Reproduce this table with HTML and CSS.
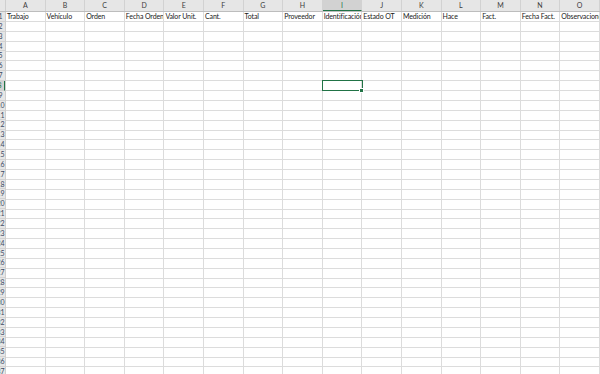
FILE: index.html
```html
<!DOCTYPE html>
<html lang="es">
<head>
<meta charset="utf-8">
<title>Hoja</title>
<link rel="stylesheet" href="styles.css">
</head>
<body>
<div class="sheet">
  <div class="colheads">
    <div class="corner"></div>
    <div class="ch">A</div><div class="ch">B</div><div class="ch">C</div><div class="ch">D</div><div class="ch">E</div>
    <div class="ch">F</div><div class="ch">G</div><div class="ch">H</div><div class="ch active">I</div><div class="ch">J</div>
    <div class="ch">K</div><div class="ch">L</div><div class="ch">M</div><div class="ch">N</div><div class="ch">O</div>
  </div>
  <div class="body">
    <div class="rowheads">
      <div class="rh"><span>1</span></div><div class="rh"><span>2</span></div><div class="rh"><span>3</span></div><div class="rh"><span>4</span></div>
      <div class="rh"><span>5</span></div><div class="rh"><span>6</span></div><div class="rh"><span>7</span></div><div class="rh active"><span>8</span></div>
      <div class="rh"><span>9</span></div><div class="rh"><span>10</span></div><div class="rh"><span>11</span></div><div class="rh"><span>12</span></div>
      <div class="rh"><span>13</span></div><div class="rh"><span>14</span></div><div class="rh"><span>15</span></div><div class="rh"><span>16</span></div>
      <div class="rh"><span>17</span></div><div class="rh"><span>18</span></div><div class="rh"><span>19</span></div><div class="rh"><span>20</span></div>
      <div class="rh"><span>21</span></div><div class="rh"><span>22</span></div><div class="rh"><span>23</span></div><div class="rh"><span>24</span></div>
      <div class="rh"><span>25</span></div><div class="rh"><span>26</span></div><div class="rh"><span>27</span></div><div class="rh"><span>28</span></div>
      <div class="rh"><span>29</span></div><div class="rh"><span>30</span></div><div class="rh"><span>31</span></div><div class="rh"><span>32</span></div>
      <div class="rh"><span>33</span></div><div class="rh"><span>34</span></div><div class="rh"><span>35</span></div><div class="rh"><span>36</span></div>
      <div class="rh"><span>37</span></div>
    </div>
    <div class="cells">
      <div class="fieldrow">
        <div class="cell">Trabajo</div><div class="cell">Vehículo</div><div class="cell">Orden</div><div class="cell">Fecha Orden</div><div class="cell">Valor Unit.</div>
        <div class="cell">Cant.</div><div class="cell">Total</div><div class="cell">Proveedor</div><div class="cell">Identificación</div><div class="cell">Estado OT</div>
        <div class="cell">Medición</div><div class="cell">Hace</div><div class="cell">Fact.</div><div class="cell">Fecha Fact.</div><div class="cell">Observaciones</div>
      </div>
      <div class="empty"></div>
      <div class="selection"><div class="handle"></div></div>
    </div>
  </div>
</div>
</body>
</html>
```
FILE: styles.css
```css
html, body {
  margin: 0;
  padding: 0;
  background: #ffffff;
  overflow: hidden;
}
body {
  width: 600px;
  height: 374px;
  font-family: Lato, "Liberation Sans", Arial, sans-serif;
}
.sheet {
  display: flex;
  flex-direction: column;
  width: 600px;
  height: 374px;
  overflow: hidden;
}
.colheads {
  display: flex;
  height: 12px;
  flex: none;
  background: #e6e6e6;
  border-bottom: 1px solid #bdbdbd;
  box-sizing: border-box;
}
.corner {
  width: 6px;
  flex: none;
  border-right: 1px solid #cfcfcf;
  box-sizing: border-box;
}
.ch {
  width: 39.6px;
  flex: none;
  box-sizing: border-box;
  border-right: 1px solid #d2d2d2;
  font-size: 7px;
  color: #3c3c3c;
  text-align: center;
  line-height: 11px;
}
.ch.active {
  background: #d2d2d2;
  color: #217346;
  border-bottom: 1.5px solid #217346;
  line-height: 10px;
}
.body {
  display: flex;
  flex: 1;
  min-height: 0;
}
.rowheads {
  width: 6px;
  flex: none;
  display: flex;
  flex-direction: column;
  background: #e6e6e6;
  border-right: 1px solid #cfcfcf;
  box-sizing: border-box;
}
.rh {
  height: 9.87px;
  flex: none;
  box-sizing: border-box;
  border-bottom: 1px solid #d2d2d2;
  display: flex;
  justify-content: flex-end;
  overflow: hidden;
  font-size: 7px;
  line-height: 9px;
  color: #3d4a63;
}
.rh span {
  flex: none;
  width: 9px;
  text-align: center;
}
.rh.active {
  background: #d2d2d2;
  border-right: 1.5px solid #217346;
  color: #217346;
}
.cells {
  position: relative;
  flex: 1;
  display: flex;
  flex-direction: column;
  min-width: 0;
}
.fieldrow {
  display: flex;
  height: 9.87px;
  flex: none;
}
.cell {
  width: 39.6px;
  flex: none;
  box-sizing: border-box;
  border-right: 1px solid #dcdcdc;
  border-bottom: 1px solid #dcdcdc;
  padding-left: 1px;
  font-size: 7px;
  letter-spacing: -0.12px;
  line-height: 9px;
  color: #1a1a1a;
  white-space: nowrap;
  overflow: hidden;
}
.empty {
  flex: 1;
  background-image:
    repeating-linear-gradient(to right, transparent 0, transparent 38.6px, #dcdcdc 38.6px, #dcdcdc 39.6px),
    repeating-linear-gradient(to bottom, transparent 0, transparent 8.87px, #dcdcdc 8.87px, #dcdcdc 9.87px);
}
.selection {
  position: absolute;
  left: 316px;
  top: 68px;
  width: 40.6px;
  height: 11px;
  box-sizing: border-box;
  border: 1.5px solid #217346;
}
.handle {
  position: absolute;
  right: -2.5px;
  bottom: -2.5px;
  width: 3px;
  height: 3px;
  background: #217346;
  border: 0.5px solid #ffffff;
}
```
